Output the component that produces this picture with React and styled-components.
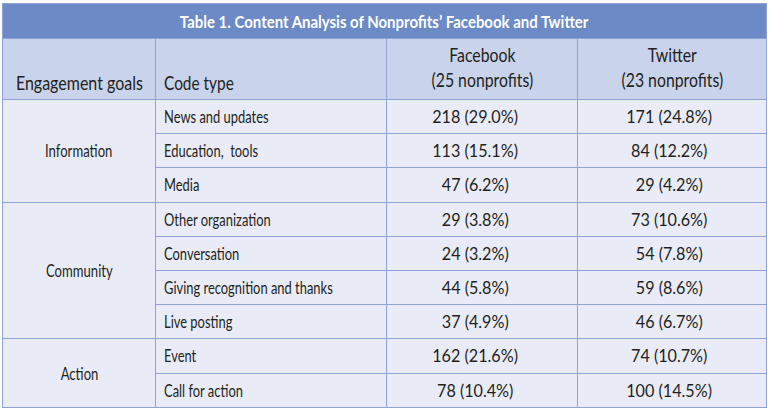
import React from 'react'
import styled, { createGlobalStyle } from 'styled-components'

const GlobalStyle = createGlobalStyle`
  body {
    margin: 0;
    background: #ffffff;
    font-family: Lato, "Open Sans", sans-serif;
    color: #231f20;
  }
`

const rows = [
  { goal: 'Information', span: 3, type: 'News and updates', fb: '218 (29.0%)', tw: '171 (24.8%)' },
  { type: 'Education,  tools', fb: '113 (15.1%)', tw: '84 (12.2%)' },
  { type: 'Media', fb: '47 (6.2%)', tw: '29 (4.2%)' },
  { goal: 'Community', span: 4, type: 'Other organization', fb: '29 (3.8%)', tw: '73 (10.6%)' },
  { type: 'Conversation', fb: '24 (3.2%)', tw: '54 (7.8%)' },
  { type: 'Giving recognition and thanks', fb: '44 (5.8%)', tw: '59 (8.6%)' },
  { type: 'Live posting', fb: '37 (4.9%)', tw: '46 (6.7%)' },
  { goal: 'Action', span: 2, type: 'Event', fb: '162 (21.6%)', tw: '74 (10.7%)' },
  { type: 'Call for action', fb: '78 (10.4%)', tw: '100 (14.5%)' }
]

function App() {
  return (
    <Page>
      <GlobalStyle />
      <Table>
        <colgroup>
          <col style={{ width: 153 }} />
          <col style={{ width: 231 }} />
          <col style={{ width: 191 }} />
          <col style={{ width: 189 }} />
        </colgroup>
        <thead>
          <tr>
            <Title colSpan={4}>
              <Squeeze scale={0.88}>Table 1. Content Analysis of Nonprofits’ Facebook and Twitter</Squeeze>
            </Title>
          </tr>
          <tr>
            <Head align="center" valign="bottom">
              <Centered>
                <Squeeze scale={0.8}>Engagement goals</Squeeze>
              </Centered>
            </Head>
            <Head align="left" valign="bottom">
              <Squeeze scale={0.77} origin="left">Code type</Squeeze>
            </Head>
            <Head align="center" valign="middle">
              <Squeeze scale={0.79}>
                Facebook
                <br />
                (25 nonprofits)
              </Squeeze>
            </Head>
            <Head align="center" valign="middle">
              <Squeeze scale={0.79}>
                Twitter
                <br />
                (23 nonprofits)
              </Squeeze>
            </Head>
          </tr>
        </thead>
        <tbody>
          {rows.map((r, i) => (
            <tr key={i}>
              {r.goal && (
                <Goal rowSpan={r.span}>
                  <Squeeze>{r.goal}</Squeeze>
                </Goal>
              )}
              <Cell>
                <Squeeze scale={0.76} origin="left">{r.type}</Squeeze>
              </Cell>
              <Num $pr={22}>
                <Squeeze scale={0.95}>{r.fb}</Squeeze>
              </Num>
              <Num $pr={14}>
                <Squeeze scale={0.95}>{r.tw}</Squeeze>
              </Num>
            </tr>
          ))}
        </tbody>
      </Table>
    </Page>
  )
}

const Page = styled.div`
  padding: 3px 5px 0 2px;
`

const Table = styled.table`
  width: 764px;
  table-layout: fixed;
  border-collapse: collapse;
  border: 1px solid #8ea3d4;
  font-size: 17px;
`

// the print font is a condensed face, so each label is narrowed
const Squeeze = styled.span`
  display: inline-block;
  white-space: pre;
  transform: scaleX(${p => p.scale || 0.77});
  transform-origin: ${p => p.origin || 'center'};
`

const Centered = styled.div`
  display: flex;
  justify-content: center;
`

const Title = styled.th`
  height: 34px;
  padding: 0;
  background: #6b8ac6;
  color: #ffffff;
  font-weight: bold;
  font-size: 17px;
  text-align: center;
  vertical-align: middle;
  border-bottom: 1px solid #8ea3d4;
`

const Head = styled.th`
  height: 56px;
  padding: 0 8px 4px;
  background: #c9d3ec;
  font-weight: normal;
  font-size: 20px;
  line-height: 25px;
  text-align: ${p => p.align};
  vertical-align: ${p => p.valign};
  border: 1px solid #8ea3d4;
  border-top: none;
  white-space: nowrap;
`

const Cell = styled.td`
  height: 33.2px;
  padding: 0 8px;
  background: #e9ecf7;
  border: 1px solid #8ea3d4;
  vertical-align: middle;
  white-space: nowrap;
`

const Goal = styled(Cell)`
  text-align: center;
`

const Num = styled(Cell)`
  text-align: center;
  padding-right: ${p => p.$pr}px;
`

export default App
